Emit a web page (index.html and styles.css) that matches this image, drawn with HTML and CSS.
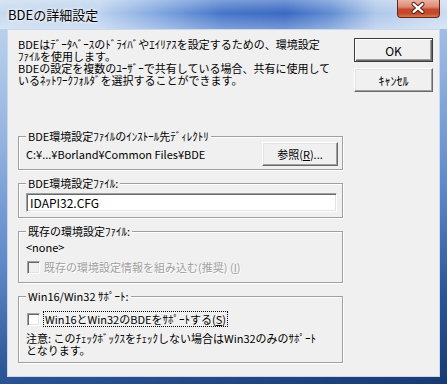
FILE: index.html
```html
<!DOCTYPE html>
<html lang="ja">
<head>
<meta charset="UTF-8">
<title>BDEの詳細設定</title>
<link rel="stylesheet" href="styles.css">
</head>
<body>
<div class="window">
    <div class="titlebar">
        <span class="title">BDEの詳細設定</span>
        <div class="close">
            <svg width="43" height="18" viewBox="0 0 43 18">
                <path d="M17 5 L26 13 M26 5 L17 13" stroke="#5a1a10" stroke-width="4.4" stroke-linecap="round"/>
                <path d="M17 5 L26 13 M26 5 L17 13" stroke="#fff" stroke-width="2.4" stroke-linecap="round"/>
            </svg>
        </div>
    </div>
    <div class="client">
        <div class="top">
            <p class="desc">BDEはﾃﾞｰﾀﾍﾞｰｽのﾄﾞﾗｲﾊﾞやｴｲﾘｱｽを設定するための、環境設定<br>ﾌｧｲﾙを使用します。<br>BDEの設定を複数のﾕｰｻﾞｰで共有している場合、共有に使用して<br>いるﾈｯﾄﾜｰｸﾌｫﾙﾀﾞを選択することができます。</p>
            <div class="actions">
                <button class="btn default">OK</button>
                <button class="btn">ｷｬﾝｾﾙ</button>
            </div>
        </div>
        <div class="groups">
            <fieldset class="group group-dir">
                <legend>BDE環境設定ﾌｧｲﾙのｲﾝｽﾄｰﾙ先ﾃﾞｨﾚｸﾄﾘ</legend>
                <div class="row">
                    <span>C:¥...¥Borland¥Common Files¥BDE</span>
                    <button class="btn browse">参照(<u>R</u>)...</button>
                </div>
            </fieldset>
            <fieldset class="group group-file">
                <legend>BDE環境設定ﾌｧｲﾙ:</legend>
                <input class="field" type="text" value="IDAPI32.CFG">
            </fieldset>
            <fieldset class="group group-old">
                <legend>既存の環境設定ﾌｧｲﾙ:</legend>
                <div class="line">&lt;none&gt;</div>
                <div class="check disabled">
                    <span class="box"></span>
                    <span class="label">既存の環境設定情報を組み込む(推奨) (<u>I</u>)</span>
                </div>
            </fieldset>
            <fieldset class="group group-win">
                <legend>Win16/Win32 ｻﾎﾟｰﾄ:</legend>
                <div class="check">
                    <span class="box"></span>
                    <span class="label focus">Win16とWin32のBDEをｻﾎﾟｰﾄする(<u>S</u>)</span>
                </div>
                <p class="note">注意: このﾁｪｯｸﾎﾞｯｸｽをﾁｪｯｸしない場合はWin32のみのｻﾎﾟｰﾄ<br>となります。</p>
            </fieldset>
        </div>
    </div>
</div>
</body>
</html>
```

FILE: styles.css
```css
body {
    margin: 0;
    font-family: "Noto Sans CJK JP", sans-serif;
    font-size: 11px;
    color: #000;
}

.window {
    width: 447px;
    height: 384px;
    box-sizing: border-box;
    padding: 0 7px 7px 7px;
    display: flex;
    flex-direction: column;
    background: linear-gradient(170deg, #c4d8f0 0%, #95b4e0 30%, #5d87c9 58%, #2d5699 80%, #183a72 100%);
}

.titlebar {
    height: 29px;
    margin: 0 -7px;
    padding: 0 7px 0 8px;
    display: flex;
    align-items: flex-start;
    background:
        linear-gradient(180deg, rgba(255, 255, 255, 0.3) 0%, rgba(255, 255, 255, 0) 45%, rgba(255, 255, 255, 0.3) 100%),
        linear-gradient(90deg, #c6d9f0 0%, #bcd2ee 22%, #7ea5df 36%, #4575c8 50%, #3a6ac3 64%, #628dd3 74%, #aec7ea 84%, #cbdcf2 100%);
}

.title {
    font-size: 13px;
    line-height: 29px;
    text-shadow: 0 0 5px #fff, 0 0 3px #fff;
}

.close {
    margin-left: auto;
    width: 43px;
    height: 18px;
    box-sizing: border-box;
    border: 1px solid #6a2418;
    border-top: none;
    border-radius: 0 0 4px 4px;
    background: linear-gradient(180deg, #e9b3a3 0%, #dd8b74 40%, #c8472d 55%, #c24a2f 80%, #d97a4f 100%);
    display: flex;
}

.close svg {
    margin: -1px 0 0 -1px;
}

.client {
    flex: 1;
    background: #f0f0f0;
    border: 1px solid #c9d8ea;
    padding: 8px 6px 0 10px;
}

.top {
    display: flex;
}

.desc {
    margin: 0;
    line-height: 12px;
    white-space: nowrap;
}

.actions {
    margin-left: auto;
    display: flex;
    flex-direction: column;
    gap: 6px;
}

.btn {
    width: 79px;
    height: 24px;
    padding: 0;
    font: inherit;
    font-size: 12px;
    color: #000;
    background: #f0f0f0;
    border: 1px solid;
    border-color: #fff #696969 #696969 #fff;
    box-shadow: inset -1px -1px #a0a0a0, inset 1px 1px #e3e3e3;
}

.btn.default {
    border-color: #3c3c3c;
    box-shadow: inset 1px 1px #fff, inset -1px -1px #696969, inset -2px -2px #a0a0a0;
}

.groups {
    width: 325px;
    margin-top: 38px;
    display: flex;
    flex-direction: column;
    gap: 7px;
}

.group {
    margin: 0;
    padding: 0 4px 3px 7px;
    min-inline-size: 0;
    border: 1px solid #a0a0a0;
    box-shadow: inset 1px 1px #fff, 1px 1px #fff;
}

.group legend {
    padding: 0 2px;
    line-height: 12px;
    background: #f0f0f0;
}

.row {
    display: flex;
    align-items: center;
}

.browse {
    width: 76px;
    margin-left: auto;
    font-size: 11px;
}

.group-file {
    padding-top: 4px;
    padding-bottom: 5px;
}

.field {
    display: block;
    width: 311px;
    height: 19px;
    box-sizing: border-box;
    margin: 0;
    padding: 0 3px;
    font: inherit;
    font-size: 12px;
    background: #fff;
    border: 1px solid;
    border-color: #a0a0a0 #fff #fff #a0a0a0;
    box-shadow: inset 1px 1px #696969, inset -1px -1px #e3e3e3;
    outline: none;
}

.group-old {
    padding-top: 3px;
    padding-bottom: 8px;
}

.line {
    line-height: 14px;
}

.check {
    margin-top: 6px;
    display: flex;
    align-items: center;
    gap: 4px;
    line-height: 14px;
    white-space: nowrap;
}

.box {
    width: 13px;
    height: 13px;
    margin-left: 1px;
    flex: none;
    box-sizing: border-box;
    background: #fff;
    border: 1px solid;
    border-color: #a0a0a0 #fff #fff #a0a0a0;
    box-shadow: inset 1px 1px #696969, inset -1px -1px #e3e3e3;
}

.check.disabled .box {
    background: #f0f0f0;
}

.check.disabled .label {
    color: #a0a0a0;
    text-shadow: 1px 1px #fff;
}

.focus {
    outline: 1px dotted #000;
    padding: 0 1px;
}

.group-win {
    padding-top: 10px;
    padding-bottom: 6px;
}

.group-win .check {
    margin-top: 0;
}

.note {
    margin: 6px 0 0 0;
    line-height: 12px;
    white-space: nowrap;
}
```
